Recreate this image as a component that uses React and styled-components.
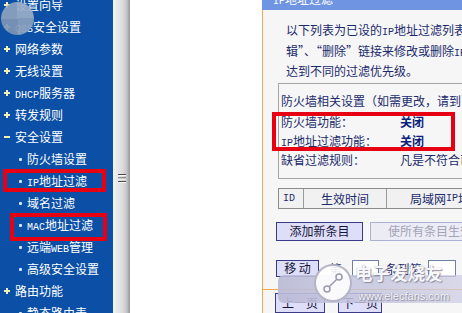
import React from 'react';
import styled, { createGlobalStyle } from 'styled-components';

const Global = createGlobalStyle`
  html, body { margin: 0; padding: 0; width: 462px; height: 313px; overflow: hidden; background: #fff; }
  body { font-family: "Noto Sans CJK SC", "DejaVu Sans", sans-serif; }
  * { box-sizing: border-box; }
`;

const Page = styled.div`
  position: relative;
  display: flex;
  width: 462px;
  height: 313px;
  overflow: hidden;
  font-size: 12px;
`;

const Lat = styled.span`
  font-family: "Liberation Mono", monospace;
  font-size: 10px;
  line-height: 1;
`;

const LAT = /([\x20-\x7e]+)/;
function Mixed({ text }) {
  return text.split(LAT).map((part, i) =>
    i % 2 === 1 ? <Lat key={i}>{part}</Lat> : part ? <React.Fragment key={i}>{part}</React.Fragment> : null
  );
}

/* ---------- sidebar ---------- */
const Sidebar = styled.nav`
  width: 113px;
  flex: none;
  background: #0b50a6;
  overflow: hidden;
`;
const MenuList = styled.ul`
  list-style: none;
  margin: -6px 0 0;
  padding: 0;
`;
const MenuItem = styled.li`
  height: 22px;
  display: flex;
  align-items: center;
  gap: 5px;
  padding-left: ${p => (p.$sub ? 19 : 4)}px;
  color: #fff;
  white-space: nowrap;
  line-height: 14px;
  overflow: hidden;
`;
const SignSvg = styled.svg`
  flex: none;
  display: block;
`;
const Bullet = styled.span`
  flex: none;
  width: 3px;
  height: 3px;
  border-radius: 1px;
  background: #d4e8ff;
`;
const Sign = ({ open }) => (
  <SignSvg viewBox="0 0 6 6" width="6" height="6">
    <rect x="0" y="2" width="6" height="2" fill="#f2f0b4" />
    {!open && <rect x="2" y="0" width="2" height="6" fill="#f2f0b4" />}
  </SignSvg>
);

const menu = [
  { t: '设置向导' },
  { t: 'QSS安全设置' },
  { t: '网络参数' },
  { t: '无线设置' },
  { t: 'DHCP服务器' },
  { t: '转发规则' },
  { t: '安全设置', open: true },
  { t: '防火墙设置', sub: true },
  { t: 'IP地址过滤', sub: true },
  { t: '域名过滤', sub: true },
  { t: 'MAC地址过滤', sub: true },
  { t: '远端WEB管理', sub: true },
  { t: '高级安全设置', sub: true },
  { t: '路由功能' },
  { t: '静态路由表', sub: true },
];

/* ---------- splitter ---------- */
const Splitter = styled.div`
  width: 17px;
  flex: none;
  background: linear-gradient(to right, #f3f3f3 0, #e9e9e9 4px, #dadada 10px, #c9c9c9 13px, #b6b6b6 15px, #9e9e9e 16px, #9e9e9e 17px);
  display: flex;
  justify-content: center;
  padding-top: 174px;
`;
const Grip = () => (
  <svg width="8" height="9" viewBox="0 0 8 9">
    <rect x="0" y="0" width="8" height="1" fill="#4a4a4a" />
    <rect x="0" y="1" width="8" height="1" fill="#fafafa" />
    <rect x="0" y="3.5" width="8" height="1" fill="#4a4a4a" />
    <rect x="0" y="4.5" width="8" height="1" fill="#fafafa" />
    <rect x="0" y="7" width="8" height="1" fill="#4a4a4a" />
    <rect x="0" y="8" width="8" height="1" fill="#fafafa" />
  </svg>
);

const Blank = styled.div`
  width: 132px;
  flex: none;
  background: #fff;
`;

/* ---------- content panel ---------- */
const Panel = styled.section`
  flex: 1;
  min-width: 0;
  display: flex;
  flex-direction: column;
  overflow: hidden;
`;
const PanelHeader = styled.header`
  height: 10px;
  flex: none;
  background: #6f94e2;
  overflow: hidden;
  padding-left: 11px;
  color: #fff;
`;
const HeaderTitle = styled.span`
  display: block;
  line-height: 12px;
  margin-top: -7px;
  white-space: nowrap;
`;
const PanelBody = styled.div`
  flex: 1;
  background: #f6f6f6;
  border-left: 1px solid #f0a849;
  color: #1b2a6c;
  padding-top: 10px;
  white-space: nowrap;
`;
const Intro = styled.p`
  margin: 0 0 0 23px;
`;
const Line = styled.span`
  display: block;
  height: 20.5px;
  line-height: 20.5px;
  overflow: hidden;
`;
const InfoBox = styled.div`
  margin: 1.5px 0 0 15px;
  border: 1px solid #a6a6a6;
  border-right: none;
  padding: 6px 0 9px 2px;
`;
const InfoRow = styled.div`
  display: grid;
  grid-template-columns: 119px auto;
  height: ${p => p.$h || 19}px;
  align-items: center;
  overflow: hidden;
`;
const Value = styled.span`
  font-weight: ${p => (p.$strong ? 700 : 400)};
  color: ${p => (p.$strong ? '#0f1f7e' : 'inherit')};
`;
const TableHead = styled.div`
  margin: 9px 0 0 15px;
  height: 21px;
  display: grid;
  grid-template-columns: 24px 83px 1fr;
  border: 1px solid #8c8c8c;
  border-right: none;
  background: #f1f1f1;
`;
const HeadCell = styled.div`
  display: flex;
  align-items: center;
  justify-content: ${p => (p.$center ? 'center' : 'flex-start')};
  padding-left: ${p => p.$pad || 0}px;
  border-left: ${p => (p.$first ? 'none' : '1px solid #9a9a9a')};
`;
const ButtonRow = styled.div`
  margin: 12.5px 0 0 13px;
  display: flex;
  gap: 7px;
  height: 19px;
`;
const Button = styled.button`
  flex: none;
  width: ${p => p.$w}px;
  height: 100%;
  padding: 0;
  font: inherit;
  font-size: 12px;
  line-height: 1;
  color: ${p => (p.$disabled ? '#a3a3b3' : '#15153a')};
  background: ${p => (p.$disabled ? '#ececf7' : '#dedef8')};
  border: 1px solid ${p => (p.$disabled ? '#aeb0d4' : '#3a3a88')};
  white-space: nowrap;
  overflow: hidden;
`;
const MoveRow = styled.div`
  margin: 19px 0 0 13px;
  display: flex;
  height: 17px;
  align-items: stretch;
`;
const Label = styled.span`
  width: ${p => p.$w}px;
  flex: none;
  display: flex;
  align-items: center;
  justify-content: center;
`;
const Field = styled.span`
  width: ${p => p.$w}px;
  flex: none;
  background: #fff;
  border: 1px solid #6f7fa6;
`;
const Divider = styled.div`
  margin-top: 12px;
  border-top: 1px solid #f0a849;
`;
const PageRow = styled.div`
  margin: 3px 0 0 12px;
  display: flex;
  gap: 13px;
  height: 20px;
`;

/* ---------- overlays ---------- */
const RedMark = styled.div`
  position: absolute;
  left: ${p => p.$x}px;
  top: ${p => p.$y}px;
  width: ${p => p.$w}px;
  height: ${p => p.$h}px;
  border: 4px solid #e60012;
  pointer-events: none;
`;
const CornerBadge = styled.div`
  position: absolute;
  left: 1px;
  top: 2px;
  width: 33px;
  height: 33px;
  border-radius: 50%;
  background: conic-gradient(#9badc7 0 25%, #8aa0bf 25% 50%, #7e95b6 50% 75%, #8ea2be 75% 100%);
  opacity: 0.92;
`;
const WmBand = styled.div`
  position: absolute;
  left: 278px;
  top: 275px;
  width: 184px;
  height: 28px;
  border-radius: 6px 0 0 6px;
  background: linear-gradient(to right, rgba(186,186,214,0.92), rgba(196,196,222,0.85) 40%, rgba(206,206,228,0.75));
`;
const WmLogo = styled.div`
  position: absolute;
  left: 314px;
  top: 264px;
  width: 38px;
  height: 38px;
  border-radius: 50%;
  background: rgba(255,255,255,0.9);
  border: 2px solid rgba(150,150,172,0.7);
  display: flex;
  align-items: center;
  justify-content: center;
`;
const WmTitle = styled.div`
  position: absolute;
  left: 355px;
  top: 262px;
  font-size: 17.5px;
  line-height: 22px;
  font-weight: 700;
  color: rgba(255,255,255,0.95);
  text-shadow: 0 0 1px #8a8aa0, 1px 1px 1px rgba(110,110,135,0.7);
  white-space: nowrap;
`;
const WmUrl = styled.div`
  position: absolute;
  left: 358px;
  top: 289px;
  font-family: "Liberation Sans", Arial, sans-serif;
  font-size: 11px;
  line-height: 14px;
  color: rgba(255,255,255,0.95);
  text-shadow: 0 0 1px #8a8aa0, 1px 1px 1px rgba(110,110,135,0.7);
  white-space: nowrap;
`;

export default function App() {
  return (
    <Page>
      <Global />
      <Sidebar>
        <MenuList>
          {menu.map((m, i) => (
            <MenuItem key={i} $sub={m.sub}>
              {m.sub ? <Bullet /> : <Sign open={m.open} />}
              <span><Mixed text={m.t} /></span>
            </MenuItem>
          ))}
        </MenuList>
      </Sidebar>
      <Splitter><Grip /></Splitter>
      <Blank />
      <Panel>
        <PanelHeader><HeaderTitle><Mixed text="IP地址过滤" /></HeaderTitle></PanelHeader>
        <PanelBody>
          <Intro>
            <Line><Mixed text="以下列表为已设的IP地址过滤列表，您可以通过点击列表后的“编" /></Line>
            <Line><Mixed text="辑”、“删除”链接来修改或删除IP地址过滤条目，并可" /></Line>
            <Line>达到不同的过滤优先级。</Line>
          </Intro>
          <InfoBox>
            <InfoRow $h={21}><span>防火墙相关设置（如需更改，请到“防火墙设置”）</span></InfoRow>
            <InfoRow $h={20}><span>防火墙功能：</span><Value $strong>关闭</Value></InfoRow>
            <InfoRow $h={19}><span><Mixed text="IP地址过滤功能：" /></span><Value $strong>关闭</Value></InfoRow>
            <InfoRow $h={19}><span>缺省过滤规则：</span><Value>凡是不符合已设IP地址过滤规则的数据包</Value></InfoRow>
          </InfoBox>
          <TableHead>
            <HeadCell $first $pad={4}><Lat>ID</Lat></HeadCell>
            <HeadCell $center>生效时间</HeadCell>
            <HeadCell $pad={23}><Mixed text="局域网IP地址" /></HeadCell>
          </TableHead>
          <ButtonRow>
            <Button $w={87}>添加新条目</Button>
            <Button $w={120} $disabled>使所有条目生效</Button>
          </ButtonRow>
          <MoveRow>
            <Button $w={43}>移 动</Button>
            <Label $w={33}>第</Label>
            <Field $w={27} />
            <Label $w={49}>条到第</Label>
            <Field $w={28} />
          </MoveRow>
          <Divider />
          <PageRow>
            <Button $w={50}>上一页</Button>
            <Button $w={44}>下一页</Button>
          </PageRow>
        </PanelBody>
      </Panel>

      <RedMark $x={3} $y={169} $w={103} $h={23} />
      <RedMark $x={10} $y={213} $w={97} $h={28} />
      <RedMark $x={272} $y={112} $w={183} $h={39} />

      <CornerBadge />
      <WmBand />
      <WmLogo>
        <svg width="26" height="26" viewBox="0 0 26 26">
          <circle cx="7" cy="19" r="3" fill="none" stroke="#9a9ab0" strokeWidth="1.5" />
          <circle cx="19" cy="7" r="3" fill="none" stroke="#9a9ab0" strokeWidth="1.5" />
          <line x1="9.2" y1="16.8" x2="16.8" y2="9.2" stroke="#9a9ab0" strokeWidth="1.5" />
        </svg>
      </WmLogo>
      <WmTitle>电子发烧友</WmTitle>
      <WmUrl>www.elecfans.com</WmUrl>
    </Page>
  );
}
